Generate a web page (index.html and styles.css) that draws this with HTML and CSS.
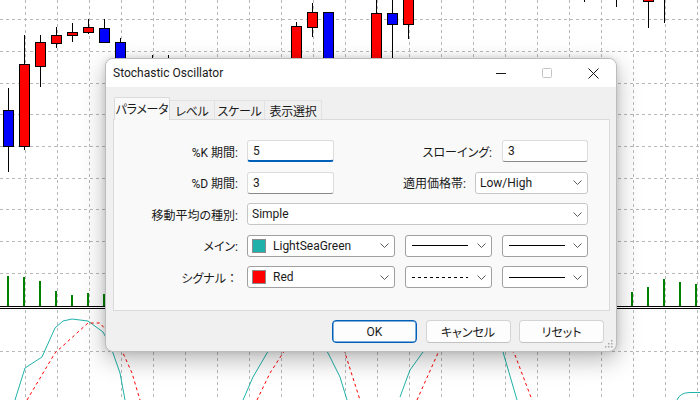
FILE: index.html
```html
<!DOCTYPE html>
<html lang="ja">
<head>
<meta charset="utf-8">
<title>Stochastic Oscillator</title>
<link rel="stylesheet" href="styles.css">
</head>
<body>
<div class="screen">
  <svg class="chart" width="700" height="400" viewBox="0 0 700 400">
    <path class="grid" d="M25.5 0V306M57.5 0V306M89.5 0V306M121.5 0V306M153.5 0V306M185.5 0V306M217.5 0V306M249.5 0V306M281.5 0V306M313.5 0V306M345.5 0V306M377.5 0V306M409.5 0V306M441.5 0V306M473.5 0V306M505.5 0V306M537.5 0V306M569.5 0V306M601.5 0V306M633.5 0V306M665.5 0V306M697.5 0V306
      M25.5 310V400M57.5 310V400M89.5 310V400M121.5 310V400M153.5 310V400M185.5 310V400M217.5 310V400M249.5 310V400M281.5 310V400M313.5 310V400M345.5 310V400M377.5 310V400M409.5 310V400M441.5 310V400M473.5 310V400M505.5 310V400M537.5 310V400M569.5 310V400M601.5 310V400M633.5 310V400M665.5 310V400M697.5 310V400
      M0 19.5H700M0 51.5H700M0 83.5H700M0 114.5H700M0 146.5H700M0 178.5H700M0 209.5H700M0 241.5H700M0 273.5H700M0 351.5H700"/>
    <g class="wick">
      <path d="M8.5 88V172M24.5 35V150M40.5 35V87M56.5 27V48M72.5 23V42M88.5 19V34M104.5 19V42M120.5 38V90M152.5 55V90M168.5 55V90M296.5 22V100M312.5 3V37M328.5 12V90M376.5 0V80M392.5 0V70M408.5 0V39M584.5 0V2M616.5 0V7M648.5 0V28M664.5 0V23"/>
    </g>
    <g class="bodies">
      <rect class="bear" x="3.5" y="110.5" width="10" height="36"/>
      <rect class="bull" x="19.5" y="64.5" width="10" height="82"/>
      <rect class="bull" x="35.5" y="42.5" width="10" height="24"/>
      <rect class="bull" x="51.5" y="35.5" width="10" height="8"/>
      <rect class="bull" x="67.5" y="32.5" width="10" height="3"/>
      <rect class="bull" x="83.5" y="27.5" width="10" height="5"/>
      <rect class="bear" x="99.5" y="28.5" width="10" height="14"/>
      <rect class="bear" x="115.5" y="42.5" width="10" height="40"/>
      <rect class="bull" x="291.5" y="26.5" width="10" height="60"/>
      <rect class="bull" x="307.5" y="12.5" width="10" height="15"/>
      <rect class="bear" x="323.5" y="12.5" width="10" height="70"/>
      <rect class="bull" x="371.5" y="13.5" width="10" height="60"/>
      <rect class="bear" x="387.5" y="13.5" width="10" height="11"/>
      <rect class="bull" x="403.5" y="-5.5" width="10" height="30"/>
      <rect class="bull" x="643.5" y="-5.5" width="10" height="7"/>
    </g>
    <g class="vol">
      <rect x="7" y="276" width="2" height="30"/>
      <rect x="23" y="277" width="2" height="29"/>
      <rect x="39" y="281" width="2" height="25"/>
      <rect x="55" y="291" width="2" height="15"/>
      <rect x="71" y="295" width="2" height="11"/>
      <rect x="87" y="293" width="2" height="13"/>
      <rect x="103" y="294" width="2" height="12"/>
      <rect x="631" y="292" width="2" height="14"/>
      <rect x="647" y="287" width="2" height="19"/>
      <rect x="663" y="279" width="2" height="27"/>
      <rect x="679" y="282" width="2" height="24"/>
      <rect x="695" y="284" width="2" height="22"/>
    </g>
    <path class="sep" d="M0 306.5H700M0 308.5H700"/>
    <g class="main-line">
      <path d="M15 400L25 368L42 357L55 328L63 321L72 319L88 321L103 332L110 345L113 353L120 373L125 400"/>
      <path d="M243 400L253 377L267 353L280 335"/>
      <path d="M315 335L328 353L340 377L347 400"/>
      <path d="M400 397L410 370L423 352L430 340"/>
      <path d="M495 340L503 352L517 400"/>
      <path d="M677 400Q680 392.5 690 392.5L700 392.5"/>
    </g>
    <g class="signal-line">
      <path d="M27 400L55 353L88 323L100 323L110 335L123 353L132 373L140 400"/>
      <path d="M257 400L270 373L283 353L295 335"/>
      <path d="M333 335L345 353L360 400"/>
      <path d="M417 400L438 353L445 340"/>
      <path d="M505 340L515 355L532 400"/>
    </g>
  </svg>

  <div class="dialog">
    <div class="titlebar">
      <span class="title">Stochastic Oscillator</span>
      <div class="caption">
        <span class="cap-btn"><svg width="10" height="10" viewBox="0 0 10 10"><path d="M0 5.5H10" class="cap-ico"/></svg></span>
        <span class="cap-btn"><svg width="10" height="10" viewBox="0 0 10 10"><rect x="0.5" y="0.5" width="9" height="9" rx="1" class="cap-ico disabled"/></svg></span>
        <span class="cap-btn"><svg width="11" height="11" viewBox="0 0 11 11"><path d="M0.5 0.5L10.5 10.5M10.5 0.5L0.5 10.5" class="cap-ico"/></svg></span>
      </div>
    </div>
    <div class="body">
      <div class="tabs">
        <div class="tab active t1">パラメータ</div>
        <div class="tab t2">レベル</div>
        <div class="tab t3">スケール</div>
        <div class="tab t4">表示選択</div>
      </div>
      <div class="panel">
        <div class="row">
          <span class="lbl">%K 期間:</span>
          <div class="edit w87 focused">5</div>
          <span class="lbl2 m10">スローイング:</span>
          <div class="edit w86">3</div>
        </div>
        <div class="row">
          <span class="lbl">%D 期間:</span>
          <div class="edit w87">3</div>
          <span class="lbl2 m9">適用価格帯:</span>
          <div class="combo w113"><span class="val">Low/High</span><svg class="chev" width="9" height="5" viewBox="0 0 9 5"><path d="M0.5 0.5L4.5 4.5L8.5 0.5"/></svg></div>
        </div>
        <div class="row">
          <span class="lbl">移動平均の種別:</span>
          <div class="combo grow"><span class="val">Simple</span><svg class="chev" width="9" height="5" viewBox="0 0 9 5"><path d="M0.5 0.5L4.5 4.5L8.5 0.5"/></svg></div>
        </div>
        <div class="row">
          <span class="lbl">メイン:</span>
          <div class="combo dark w148"><span class="swatch sea"></span><span class="val">LightSeaGreen</span><svg class="chev" width="9" height="5" viewBox="0 0 9 5"><path d="M0.5 0.5L4.5 4.5L8.5 0.5"/></svg></div>
          <div class="combo dark w87 gapl"><span class="ls solid"></span><svg class="chev" width="9" height="5" viewBox="0 0 9 5"><path d="M0.5 0.5L4.5 4.5L8.5 0.5"/></svg></div>
          <div class="combo dark w86 gapl"><span class="ls solid"></span><svg class="chev" width="9" height="5" viewBox="0 0 9 5"><path d="M0.5 0.5L4.5 4.5L8.5 0.5"/></svg></div>
        </div>
        <div class="row">
          <span class="lbl">シグナル<span class="fw">：</span></span>
          <div class="combo dark w148"><span class="swatch red"></span><span class="val">Red</span><svg class="chev" width="9" height="5" viewBox="0 0 9 5"><path d="M0.5 0.5L4.5 4.5L8.5 0.5"/></svg></div>
          <div class="combo dark w87 gapl"><span class="ls dashed"></span><svg class="chev" width="9" height="5" viewBox="0 0 9 5"><path d="M0.5 0.5L4.5 4.5L8.5 0.5"/></svg></div>
          <div class="combo dark w86 gapl"><span class="ls solid"></span><svg class="chev" width="9" height="5" viewBox="0 0 9 5"><path d="M0.5 0.5L4.5 4.5L8.5 0.5"/></svg></div>
        </div>
      </div>
      <div class="buttons">
        <button class="btn default">OK</button>
        <button class="btn">キャンセル</button>
        <button class="btn">リセット</button>
      </div>
    </div>
    <svg class="grip" width="8" height="8" viewBox="0 0 8 8">
      <rect x="6" y="0" width="1.5" height="1.5"/>
      <rect x="3" y="3" width="1.5" height="1.5"/><rect x="6" y="3" width="1.5" height="1.5"/>
      <rect x="0" y="6" width="1.5" height="1.5"/><rect x="3" y="6" width="1.5" height="1.5"/><rect x="6" y="6" width="1.5" height="1.5"/>
    </svg>
  </div>
</div>
</body>
</html>
```

FILE: styles.css
```css
* { box-sizing: border-box; }
html, body { margin: 0; padding: 0; }
body {
  width: 700px;
  height: 400px;
  overflow: hidden;
  background: #ffffff;
  font-family: Roboto, "Noto Sans CJK JP", sans-serif;
  font-size: 12px;
  color: #1a1a1a;
  font-feature-settings: "palt";
}
.screen { position: relative; width: 700px; height: 400px; }
.chart { display: block; }
.grid { fill: none; stroke: #b8b8b8; stroke-width: 1; stroke-dasharray: 3 3; }
.wick path { stroke: #000; stroke-width: 1; fill: none; }
.bodies rect { stroke: #000; stroke-width: 1; }
.bull { fill: #ff0000; }
.bear { fill: #0000ff; }
.vol rect { fill: #008000; }
.sep { stroke: #000; stroke-width: 1; fill: none; }
.main-line path { fill: none; stroke: #20b2aa; stroke-width: 1; }
.signal-line path { fill: none; stroke: #ff0000; stroke-width: 1; stroke-dasharray: 3 3; }

.dialog {
  position: absolute;
  left: 105px;
  top: 58px;
  width: 512px;
  height: 294px;
  border: 1px solid #bcbcbc;
  border-radius: 8px;
  background: #f0f0f0;
  overflow: hidden;
  box-shadow: 0 8px 24px rgba(0,0,0,0.28), 0 0 6px rgba(0,0,0,0.12);
  display: flex;
  flex-direction: column;
}
.titlebar {
  height: 28px;
  background: #ffffff;
  display: flex;
  align-items: center;
  padding-left: 7px;
  flex: none;
}
.title { font-size: 12px; color: #1a1a1a; }
.caption { margin-left: auto; display: flex; height: 28px; }
.cap-btn { width: 46px; height: 28px; display: flex; align-items: center; justify-content: center; }
.cap-ico { fill: none; stroke: #1a1a1a; stroke-width: 1; }
.cap-ico.disabled { stroke: #c4c4c4; }

.body {
  flex: 1;
  padding: 10px 6px 0 7px;
  display: flex;
  flex-direction: column;
}
.tabs {
  display: flex;
  align-items: flex-end;
  height: 23px;
  margin-bottom: -1px;
  padding-left: 1px;
}
.tab {
  height: 20px;
  display: flex;
  align-items: center;
  justify-content: center;
  white-space: nowrap;
  letter-spacing: -0.3px;
  border: 1px solid #e2e2e2;
  border-bottom: none;
  border-left: none;
  background: #f0f0f0;
  color: #1a1a1a;
  flex: none;
}
.tab.active {
  height: 23px;
  padding-bottom: 2px;
  background: #f9f9f9;
  border: 1px solid #dadada;
  border-bottom: none;
  border-radius: 2px 2px 0 0;
  position: relative;
  z-index: 1;
}
.t1 { width: 56px; }
.t2 { width: 45px; }
.t3 { width: 50px; }
.t4 { width: 57px; }

.panel {
  height: 192px;
  background: #f9f9f9;
  border: 1px solid #dadada;
  padding: 20px 21px 0 0;
  display: flex;
  flex-direction: column;
  gap: 9.5px;
}
.row { display: flex; align-items: center; height: 22px; }
.lbl { width: 124px; text-align: right; margin-right: 9px; flex: none; white-space: nowrap; }
.lbl2 { flex: 1; text-align: right; white-space: nowrap; }
.fw { font-feature-settings: normal; }
.m10 { margin-right: 10px; }
.m9 { margin-right: 9px; }

.edit {
  height: 22px;
  line-height: 20px;
  background: #ffffff;
  border: 1px solid #dcdcdc;
  border-bottom-color: #8a8a8a;
  border-radius: 3px;
  padding-left: 5px;
  flex: none;
}
.edit.focused { border-bottom: 2px solid #005fb8; }
.w87 { width: 87px; }
.w86 { width: 86px; }
.w113 { width: 113px; }
.w148 { width: 148px; }
.grow { flex: 1; }
.gapl { margin-left: 10px; }

.combo {
  height: 22px;
  background: #ffffff;
  border: 1px solid #c6c6c6;
  border-radius: 3px;
  display: flex;
  align-items: center;
  padding-left: 4px;
  padding-right: 5px;
  flex: none;
}
.combo.grow { flex: 1; }
.combo.dark { border-color: #a0a0a0; }
.val { white-space: nowrap; }
.chev { margin-left: auto; flex: none; }
.chev path { fill: none; stroke: #5a5a5a; stroke-width: 1; }
.swatch {
  width: 14px;
  height: 14px;
  border: 1px solid #8c8c8c;
  margin-right: 7px;
  flex: none;
}
.swatch.sea { background: #20b2aa; }
.swatch.red { background: #ff0000; }
.ls { width: 56px; height: 1px; margin-left: 2px; flex: none; }
.ls.solid { background: #000; }
.ls.dashed { background: repeating-linear-gradient(90deg, #000 0 3px, transparent 3px 6px); }

.buttons {
  display: flex;
  justify-content: flex-end;
  gap: 8.5px;
  margin-top: 9px;
  margin-right: 6px;
}
.btn {
  width: 85px;
  height: 23px;
  padding: 0;
  font-family: Roboto, "Noto Sans CJK JP", sans-serif;
  font-size: 12px;
  font-feature-settings: "palt";
  color: #1a1a1a;
  background: #fdfdfd;
  border: 1px solid #d4d4d4;
  border-bottom-color: #c2c2c2;
  border-radius: 4px;
}
.btn.default { border-color: #005fb8; box-shadow: inset 0 0 0 0.5px #005fb8; }
.grip { position: absolute; right: 3px; bottom: 3px; }
.grip rect { fill: #a8a8a8; }
```
